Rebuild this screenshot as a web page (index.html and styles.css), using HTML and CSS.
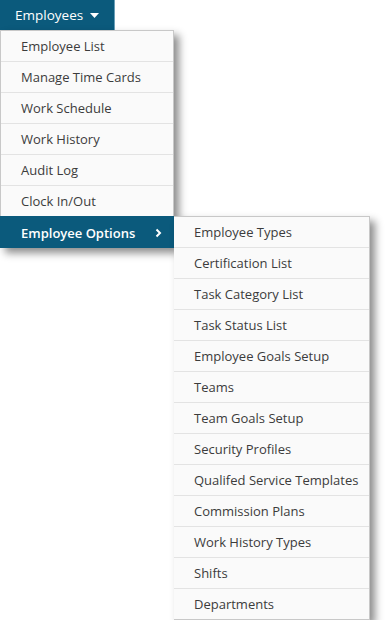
FILE: index.html
```html
<!DOCTYPE html>
<html>
<head>
<meta charset="utf-8">
<link rel="stylesheet" href="styles.css">
</head>
<body>
<div class="nav">
  <div class="top-btn">Employees <svg class="caret" width="9" height="5" viewBox="0 0 9 5"><path d="M0 0h9L4.5 5z" fill="#fff"/></svg></div>
  <div class="menus">
    <ul class="menu main">
      <li>Employee List</li>
      <li>Manage Time Cards</li>
      <li>Work Schedule</li>
      <li>Work History</li>
      <li>Audit Log</li>
      <li>Clock In/Out</li>
      <li class="active">Employee Options <svg class="chev" width="7" height="10" viewBox="0 0 7 10"><path d="M1.5 1.5L5 5l-3.5 3.5" fill="none" stroke="#fff" stroke-width="2"/></svg></li>
    </ul>
    <ul class="menu sub">
      <li>Employee Types</li>
      <li>Certification List</li>
      <li>Task Category List</li>
      <li>Task Status List</li>
      <li>Employee Goals Setup</li>
      <li>Teams</li>
      <li>Team Goals Setup</li>
      <li>Security Profiles</li>
      <li>Qualifed Service Templates</li>
      <li>Commission Plans</li>
      <li>Work History Types</li>
      <li>Shifts</li>
      <li>Departments</li>
    </ul>
  </div>
</div>
</body>
</html>
```
FILE: styles.css
```css
html, body { margin: 0; padding: 0; background: #fff; }
body { font-family: "Open Sans", "Noto Sans", sans-serif; font-size: 13px; color: #3c3c3c; }
.nav { position: relative; }
.top-btn {
  display: inline-flex; align-items: center; gap: 6px;
  height: 30px; box-sizing: border-box; padding: 0 15px 0 15px;
  background: #0b5a7c; color: #fff; font-size: 13.5px;
  border-right: 1px solid #6a9fb8;
}
.caret { margin-left: 1px; margin-top: 1px; }
.menus { display: flex; align-items: flex-start; }
.menu { list-style: none; margin: 0; padding: 0; background: #fafafa; border: 1px solid #c8c8c8; box-shadow: 5px 5px 8px rgba(0,0,0,0.45); }
.menu li { height: 31px; box-sizing: border-box; display: flex; align-items: center; border-top: 1px solid #e3e3e3; white-space: nowrap; }
.menu li:first-child { border-top: none; height: 30px; }
.main { width: 174px; box-sizing: border-box; }
.main li { padding-left: 20px; }
.main li.active { background: #0b5a7c; color: #fff; font-weight: 600; border-top-color: #0b5a7c; padding-right: 12px; justify-content: space-between; margin: 0 -1px -1px -1px; padding-left: 21px; height: 32px; }
.sub { margin-top: 186px; width: 196px; box-sizing: border-box; border-left: none; }
.sub li { padding-left: 20px; }
```
